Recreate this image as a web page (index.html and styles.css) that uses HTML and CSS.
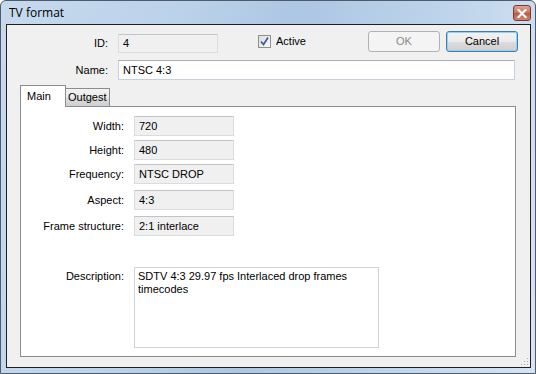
FILE: index.html
```html
<!DOCTYPE html>
<html lang="en">
<head>
    <meta charset="UTF-8">
    <title>TV format</title>
    <link rel="stylesheet" href="styles.css">
</head>
<body>
    <div class="window">
        <!-- Barra de titulo -->
        <div class="titlebar">
            <span class="title">TV format</span>
            <div class="close-btn">
                <svg width="10" height="9" viewBox="0 0 10 9">
                    <path d="M1.5 1 L8.5 8 M8.5 1 L1.5 8" stroke="#fff" stroke-width="2.2" stroke-linecap="square"/>
                </svg>
            </div>
        </div>

        <div class="client">
            <div class="top-row">
                <div class="lbl">ID:</div>
                <div class="field ro id-field">4</div>
                <div class="check">
                    <span class="box">
                        <svg width="11" height="11" viewBox="0 0 11 11">
                            <path d="M2 5.5 L4.5 8.5 L9 1.5" fill="none" stroke="#3f5f9e" stroke-width="1.8"/>
                        </svg>
                    </span>
                    Active
                </div>
                <div class="btn disabled">OK</div>
                <div class="btn default">Cancel</div>
            </div>

            <div class="name-row">
                <div class="lbl">Name:</div>
                <div class="field name-field">NTSC 4:3</div>
            </div>

            <div class="tabs">
                <div class="tab active">Main</div>
                <div class="tab">Outgest</div>
            </div>

            <div class="pane">
                <div class="row">
                    <div class="lbl">Width:</div><div class="field ro">720</div>
                </div>
                <div class="row">
                    <div class="lbl">Height:</div><div class="field ro">480</div>
                </div>
                <div class="row">
                    <div class="lbl">Frequency:</div><div class="field ro">NTSC DROP</div>
                </div>
                <div class="row wide">
                    <div class="lbl">Aspect:</div><div class="field ro">4:3</div>
                </div>
                <div class="row wide">
                    <div class="lbl">Frame structure:</div><div class="field ro">2:1 interlace</div>
                </div>
                <div class="row desc-row">
                    <div class="lbl">Description:</div>
                    <div class="field memo">SDTV 4:3 29.97 fps Interlaced drop frames timecodes</div>
                </div>
            </div>

            <div class="grip">
                <svg width="9" height="9" viewBox="0 0 9 9" fill="#a9a9a9">
                    <rect x="7" y="1" width="1" height="1"/>
                    <rect x="4" y="4" width="1" height="1"/>
                    <rect x="7" y="4" width="1" height="1"/>
                    <rect x="1" y="7" width="1" height="1"/>
                    <rect x="4" y="7" width="1" height="1"/>
                    <rect x="7" y="7" width="1" height="1"/>
                </svg>
            </div>
        </div>
    </div>
</body>
</html>
```

FILE: styles.css
```css
* {
    margin: 0;
    padding: 0;
    box-sizing: border-box;
}

body {
    font-family: 'Liberation Sans', Arial, sans-serif;
    font-size: 11px;
    color: #000;
    background: #fff;
}

/* Ventana */
.window {
    width: 536px;
    height: 374px;
    border: 1px solid #4d5b6b;
    border-radius: 6px 6px 0 0;
    background: linear-gradient(100deg, #c6d9ed 0%, #bcd2ea 30%, #adc6e2 50%, #bed4eb 75%, #d6e4f3 100%);
    padding: 0 4px 5px 5px;
    display: flex;
    flex-direction: column;
}

.titlebar {
    height: 23px;
    display: flex;
    align-items: center;
    justify-content: space-between;
}

.title {
    font-family: 'Open Sans', 'Liberation Sans', sans-serif;
    font-size: 12px;
    padding-left: 3px;
    color: #000;
}

.close-btn {
    width: 18px;
    height: 16px;
    margin-top: 1px;
    border: 1px solid #7a3a32;
    border-radius: 3px;
    background: linear-gradient(#dfa593, #c8705c 50%, #bb5741 51%, #cf8570);
    display: flex;
    align-items: center;
    justify-content: center;
}

.client {
    flex: 1;
    border: 1px solid #1f1f1f;
    background: #f0f0f0;
    display: flex;
    flex-direction: column;
    position: relative;
}

/* Campos */
.lbl {
    text-align: right;
    line-height: 20px;
    white-space: nowrap;
}

.field {
    height: 20px;
    line-height: 18px;
    padding: 0 4px;
    background: #fff;
    border: 1px solid #c5d0dc;
    border-top-color: #abadb3;
    white-space: nowrap;
}

.field.ro {
    background: #f0f0f0;
    border-color: #d9dde2;
    border-top-color: #c0c3c9;
}

.top-row {
    display: flex;
    align-items: flex-start;
    margin-top: 6px;
    height: 21px;
}

.top-row .lbl {
    width: 101px;
    margin-top: 2px;
}

.id-field {
    margin-left: 10px;
    margin-top: 3px;
    width: 100px;
    height: 19px;
    line-height: 17px;
}

.check {
    display: flex;
    align-items: center;
    gap: 5px;
    margin-left: 40px;
    margin-top: 4px;
    line-height: 13px;
}

.box {
    width: 13px;
    height: 13px;
    border: 1px solid #8e8f8f;
    background: linear-gradient(135deg, #dcdcdc, #fbfbfb);
    display: flex;
    align-items: center;
    justify-content: center;
}

.btn {
    width: 72px;
    height: 21px;
    line-height: 19px;
    text-align: center;
    border: 1px solid #707070;
    border-radius: 3px;
    background: linear-gradient(#f2f2f2, #ebebeb 50%, #dddddd 51%, #cfcfcf);
}

.btn.disabled {
    margin-left: auto;
    border-color: #adb2b5;
    background: #f4f4f4;
    color: #8a8a8a;
}

.btn.default {
    margin-left: 6px;
    margin-right: 12px;
    border-color: #3c7fb1;
    box-shadow: inset 0 0 0 1px #98d1ef;
}

.name-row {
    display: flex;
    margin-top: 8px;
}

.name-row .lbl {
    width: 101px;
}

.name-field {
    margin-left: 10px;
    width: 397px;
}

/* Pestañas */
.tabs {
    display: flex;
    align-items: flex-end;
    margin-top: 5px;
    padding-left: 13px;
    height: 21px;
}

.tab {
    height: 18px;
    line-height: 16px;
    padding: 0 2px;
    border: 1px solid #898c95;
    border-bottom: none;
    background: linear-gradient(#f2f2f2, #ebebeb 50%, #dddddd 51%, #cfcfcf);
    margin-left: -1px;
}

.tab.active {
    height: 22px;
    line-height: 20px;
    width: 46px;
    padding: 0 6px;
    background: #fff;
    margin-left: 0;
    margin-bottom: -1px;
    position: relative;
    z-index: 1;
}

.pane {
    margin-left: 13px;
    width: 496px;
    height: 251px;
    border: 1px solid #898c95;
    background: #fff;
    padding-top: 9px;
}

.row {
    display: flex;
    margin-bottom: 4px;
}

.row.wide {
    margin-top: 6px;
}

.row .lbl {
    width: 103px;
}

.row .field {
    margin-left: 10px;
    width: 100px;
}

.desc-row {
    margin-top: 31px;
}

.desc-row .lbl {
    line-height: 16px;
    margin-top: 1px;
}

.row .memo {
    width: 245px;
    height: 81px;
    white-space: normal;
    line-height: 13px;
    padding: 2px 3px;
    border-color: #d0d4d9;
}

.grip {
    position: absolute;
    right: 1px;
    bottom: 1px;
    width: 9px;
    height: 9px;
    display: flex;
}
```
